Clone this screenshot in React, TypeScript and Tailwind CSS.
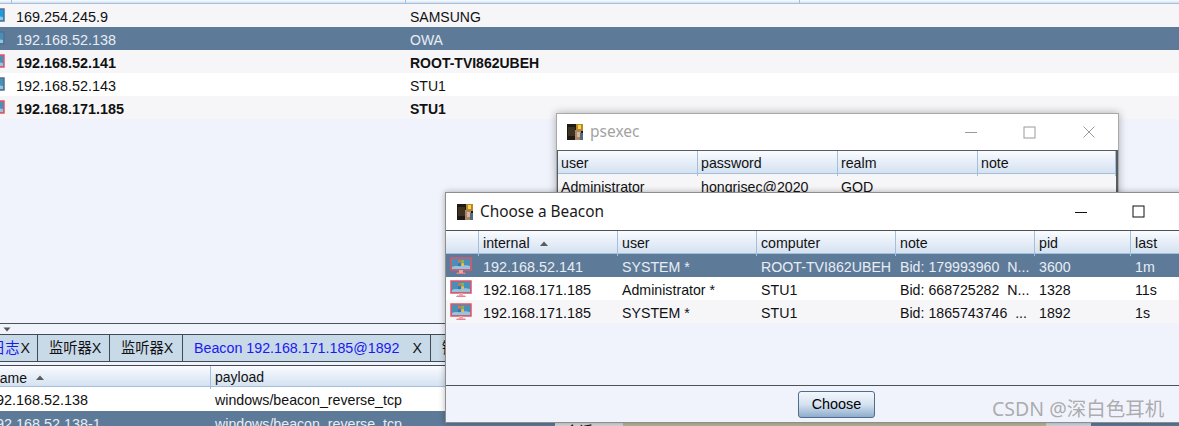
const sans = { fontFamily: '"Liberation Sans", "Noto Sans CJK SC", sans-serif' };

const headerBg = "bg-gradient-to-b from-[#fbfcff] via-[#e6eef8] to-[#d5e2f0]";

// monitor icon from the beacon tables
const HostIcon = ({ beacon = false, bright = false }: { beacon?: boolean; bright?: boolean }) => (
  <svg width="22" height="18" viewBox="0 0 22 18" className="shrink-0">
    <rect x="1" y="1" width="20" height="12" fill={bright ? "#1e9be0" : "#4a8fb8"} stroke={beacon ? "#e0566a" : "#51708f"} strokeWidth="1.5" />
    <path d="M2 10c4-2 6 0 9-1s5-1 9 0v3H2z" fill="#cfe6f3" opacity="0.6" />
    <path d="M7 15.5h8l1 1.5H6z" fill={beacon ? "#e9818c" : "#6d87a0"} />
    <rect x="9" y="13" width="4" height="3" fill={beacon ? "#eea2a9" : "#8aa0b5"} />
    {beacon && (
      <>
        <rect x="8" y="3" width="2.8" height="2.8" fill="#d9734c" />
        <rect x="11.2" y="3" width="2.8" height="2.8" fill="#86b552" />
        <rect x="8" y="6.2" width="2.8" height="2.8" fill="#2d74c4" />
        <rect x="11.2" y="6.2" width="2.8" height="2.8" fill="#e8c040" />
      </>
    )}
  </svg>
);

const Avatar = () => (
  <svg width="16" height="16" viewBox="0 0 16 16">
    <rect width="16" height="16" fill="#1d1a14" />
    <rect x="1" y="3" width="7" height="9" fill="#3d3120" />
    <rect x="9" y="0" width="7" height="7" fill="#b9862a" />
    <rect x="11" y="1" width="3" height="4" fill="#f2d94a" />
    <rect x="8" y="6" width="6" height="10" fill="#a8866e" />
    <rect x="10" y="8" width="3" height="5" fill="#d9b79a" />
    <rect x="13" y="9" width="3" height="7" fill="#55697e" />
  </svg>
);

const Controls = ({ muted, close, className = "" }: { muted?: boolean; close?: boolean; className?: string }) => {
  const c = muted ? "#9a9a9a" : "#111111";
  return (
    <div className={`flex items-center ml-auto ${className}`}>
      <svg width="14" height="12" viewBox="0 0 14 12" className={close ? "mr-[45px]" : "mr-[44px]"}>
        <path d="M1 6.5h12" stroke={c} strokeWidth="1" />
      </svg>
      <svg width="13" height="13" viewBox="0 0 13 13" className={close ? "mr-[46px]" : ""}>
        <rect x="1" y="1" width="11" height="11" fill="none" stroke={c} strokeWidth="1" />
      </svg>
      {close && (
        <svg width="14" height="14" viewBox="0 0 14 14" className="mr-[22px]">
          <path d="M1.5 1.5l11 11M12.5 1.5l-11 11" stroke={c} strokeWidth="1" />
        </svg>
      )}
    </div>
  );
};

const topRows = [
  { ip: "169.254.245.9", name: "SAMSUNG", bg: "bg-[#f6f6f9]", beacon: false, bright: true },
  { ip: "192.168.52.138", name: "OWA", bg: "bg-[#5d7a99] text-[#e8edf3]", beacon: false, bright: false },
  { ip: "192.168.52.141", name: "ROOT-TVI862UBEH", bg: "bg-[#f6f6f9] font-bold", beacon: true, bright: false },
  { ip: "192.168.52.143", name: "STU1", bg: "bg-white", beacon: false, bright: false },
  { ip: "192.168.171.185", name: "STU1", bg: "bg-[#f6f6f9] font-bold", beacon: true, bright: false },
];

const beacons = [
  ["192.168.52.141", "SYSTEM *", "ROOT-TVI862UBEH", "Bid: 179993960  N...", "3600", "1m"],
  ["192.168.171.185", "Administrator *", "STU1", "Bid: 668725282  N...", "1328", "11s"],
  ["192.168.171.185", "SYSTEM *", "STU1", "Bid: 1865743746  ...", "1892", "1s"],
];
const beaconRowBg = ["bg-[#5d7a99] text-[#e8edf3]", "bg-white", "bg-[#f6f6f9]"];

const SortUp = ({ className = "" }: { className?: string }) => (
  <svg width="10" height="6" viewBox="0 0 10 6" className={className}>
    <path d="M5 0.5l4 4.5H1z" fill="#5a5a5a" />
  </svg>
);

const PsexecWindow = () => (
  <div className="absolute left-[556px] top-[113px] w-[563px] h-[120px] flex flex-col bg-white border border-[#a9a9a9] shadow-[0_0_8px_rgba(0,0,0,0.3)]">
    <div className="h-[36px] shrink-0 flex items-center pl-[10px]">
      <Avatar />
      <span className="ml-[7px] text-[15.5px] text-[#a3a3a3]" style={{ fontFamily: '"Noto Sans", sans-serif' }}>
        psexec
      </span>
      <Controls muted close />
    </div>
    <div className="flex-1 border border-[#555c63] border-r-2 text-[14.2px] text-[#111]">
      <div className={`grid grid-cols-[140px_140px_140px_1fr] h-[23px] border-b border-[#a3bfdc] ${headerBg}`}>
        {["user", "password", "realm", "note"].map((h) => (
          <div key={h} className="pl-[3px] leading-[25px] border-r border-[#a3bfdc]">
            {h}
          </div>
        ))}
      </div>
      <div className="grid grid-cols-[140px_140px_140px_1fr] h-[24px] leading-[26px] bg-[#f6f6f9]">
        <div className="pl-[3px]">Administrator</div>
        <div className="pl-[3px]">hongrisec@2020</div>
        <div className="pl-[3px]">GOD</div>
        <div />
      </div>
    </div>
  </div>
);

const BeaconWindow = () => (
  <div className="absolute left-[445px] top-[192px] w-[800px] h-[231px] flex flex-col bg-[#f0f3fb] border border-[#8e8e8e] shadow-[0_0_6px_rgba(0,0,0,0.3)]">
    <div className="h-[37px] shrink-0 flex items-center pl-[11px] bg-white">
      <Avatar />
      <span className="ml-[7px] text-[15.4px] text-[#1a1a1a]" style={{ fontFamily: '"Noto Sans", sans-serif' }}>
        Choose a Beacon
      </span>
      <Controls className="mr-[99px]" />
    </div>
    <div className="h-[156px] shrink-0 border-y border-[#4b5258] bg-[#f0f3fb] text-[14.2px] text-[#111]">
      <div className={`grid grid-cols-[33px_139px_139px_139px_139px_96px_1fr] h-[23px] border-b border-[#a3bfdc] ${headerBg}`}>
        <div className="border-r border-[#a3bfdc]" />
        <div className="pl-[4px] leading-[25px] border-r border-[#a3bfdc] flex items-center">
          internal
          <SortUp className="ml-[9px]" />
        </div>
        {["user", "computer", "note", "pid", "last"].map((h) => (
          <div key={h} className="pl-[4px] leading-[25px] border-r border-[#a3bfdc]">
            {h}
          </div>
        ))}
      </div>
      {beacons.map((row, i) => (
        <div key={i} className={`grid grid-cols-[32px_139px_139px_139px_139px_96px_1fr] h-[23px] leading-[26px] ${beaconRowBg[i]}`}>
          <div className="flex items-center pl-[4px]">
            <HostIcon beacon />
          </div>
          {row.map((cell, j) => (
            <div key={j} className={`pl-[5px] whitespace-pre overflow-hidden ${j === 0 ? "text-[14.4px]" : ""}`}>
              {cell}
            </div>
          ))}
        </div>
      ))}
    </div>
    <div className="flex-1 flex justify-start pl-[352px] pt-[5px]">
      <button className="w-[77px] h-[27px] rounded-[3px] border border-[#4f6d8d] bg-gradient-to-b from-[#f4f7fc] via-[#d5e2f0] to-[#8fadcc] text-[14.4px] text-black">
        Choose
      </button>
    </div>
  </div>
);

const App = () => (
  <div className="relative w-[1179px] h-[426px] overflow-hidden flex flex-col bg-[#f0f3fb] text-[14px] text-[#111]" style={sans}>
    {/* hosts table */}
    <div className="h-[323px] shrink-0 overflow-hidden">
      <div className={`grid grid-cols-[12px_394px_394px_1fr] h-[4px] border-b border-[#a3bfdc] ${headerBg}`}>
        <div className="border-r border-[#a3bfdc]" />
        <div className="border-r border-[#a3bfdc]" />
        <div className="border-r border-[#a3bfdc]" />
        <div />
      </div>
      {topRows.map((r) => (
        <div key={r.ip} className={`grid grid-cols-[11px_394px_1fr] h-[23px] leading-[26px] ${r.bg}`}>
          <div className="flex items-center -ml-[17px] overflow-visible">
            <HostIcon beacon={r.beacon} bright={r.bright} />
          </div>
          <div className="pl-[5px] text-[14.4px]">{r.ip}</div>
          <div className="pl-[5px]">{r.name}</div>
        </div>
      ))}
    </div>

    {/* splitter */}
    <div className="h-[11px] shrink-0 border-t border-[#4b5258] flex items-center pl-[3px]">
      <svg width="8" height="5" viewBox="0 0 8 5">
        <path d="M0.5 0.5h7L4 4.5z" fill="#555" />
      </svg>
    </div>

    {/* tabs */}
    <div className="h-[28px] shrink-0 flex border-y border-[#3f4a55] bg-[#c8d9e8] leading-[27px] whitespace-nowrap text-[14.25px]">
      <div className="w-[38px] shrink-0 border-r border-[#3f4a55] overflow-hidden">
        <span className="-ml-[9px] inline-block text-[#1a1af0]">日志</span>
        <span className="ml-[1px]">X</span>
      </div>
      <div className="w-[72px] shrink-0 border-r border-[#3f4a55] pl-[11px]">监听器X</div>
      <div className="w-[73px] shrink-0 border-r border-[#3f4a55] pl-[11px]">监听器X</div>
      <div className="w-[248px] shrink-0 border-r border-[#3f4a55] pl-[11px] flex">
        <span className="text-[#1a1af0]">Beacon 192.168.171.185@1892</span>
        <span className="ml-[13px]">X</span>
      </div>
      <div className="pl-[11px]">键盘记录X</div>
    </div>

    {/* listeners table */}
    <div className="h-[3px] shrink-0 bg-[#f0f3fb]" />
    <div className="flex-1 overflow-hidden">
      <div className={`grid grid-cols-[211px_1fr] h-[22px] border-y border-t-[#3f4a55] border-b-[#a3bfdc] ${headerBg}`}>
        <div className="flex items-center border-r border-[#a3bfdc] overflow-hidden pt-[2px]">
          <span className="-ml-[8px]">name</span>
          <SortUp className="ml-[8px] -mt-[2px]" />
        </div>
        <div className="pl-[4px] leading-[23px]">payload</div>
      </div>
      <div className="grid grid-cols-[210px_1fr] h-[24px] leading-[27px] bg-white">
        <div className="-ml-[12px] text-[14.4px]">192.168.52.138</div>
        <div className="pl-[5px] text-[14.2px]">windows/beacon_reverse_tcp</div>
      </div>
      <div className="grid grid-cols-[210px_1fr] h-[24px] leading-[27px] bg-[#5d7a99] text-[#e8edf3]">
        <div className="-ml-[12px] text-[14.4px]">192.168.52.138-1</div>
        <div className="pl-[5px] text-[14.2px]">windows/beacon_reverse_tcp</div>
      </div>
    </div>

    {/* form behind the dialogs, only its top edge shows */}
    <div className="absolute left-[555px] top-[423px] w-[536px] h-[3px] overflow-hidden flex bg-[#d9d9d9]">
      <div className="w-[68px] pl-[10px] leading-[14px] text-[#111]" style={{ fontFamily: '"Noto Sans CJK SC", sans-serif' }}>
        会话
      </div>
      <div className="w-[423px] bg-[#b9b89c]" />
      <div className="ml-[6px] w-[39px] bg-[#cfdbe8] text-center leading-[2px]">...</div>
    </div>

    <PsexecWindow />
    <BeaconWindow />

    <span className="absolute left-[992px] top-[394px] text-[19.5px] text-[#999]/80 whitespace-nowrap" style={{ fontFamily: '"Noto Sans", "Noto Sans CJK SC", sans-serif' }}>
      CSDN @深白色耳机
    </span>
  </div>
);

export default App;
